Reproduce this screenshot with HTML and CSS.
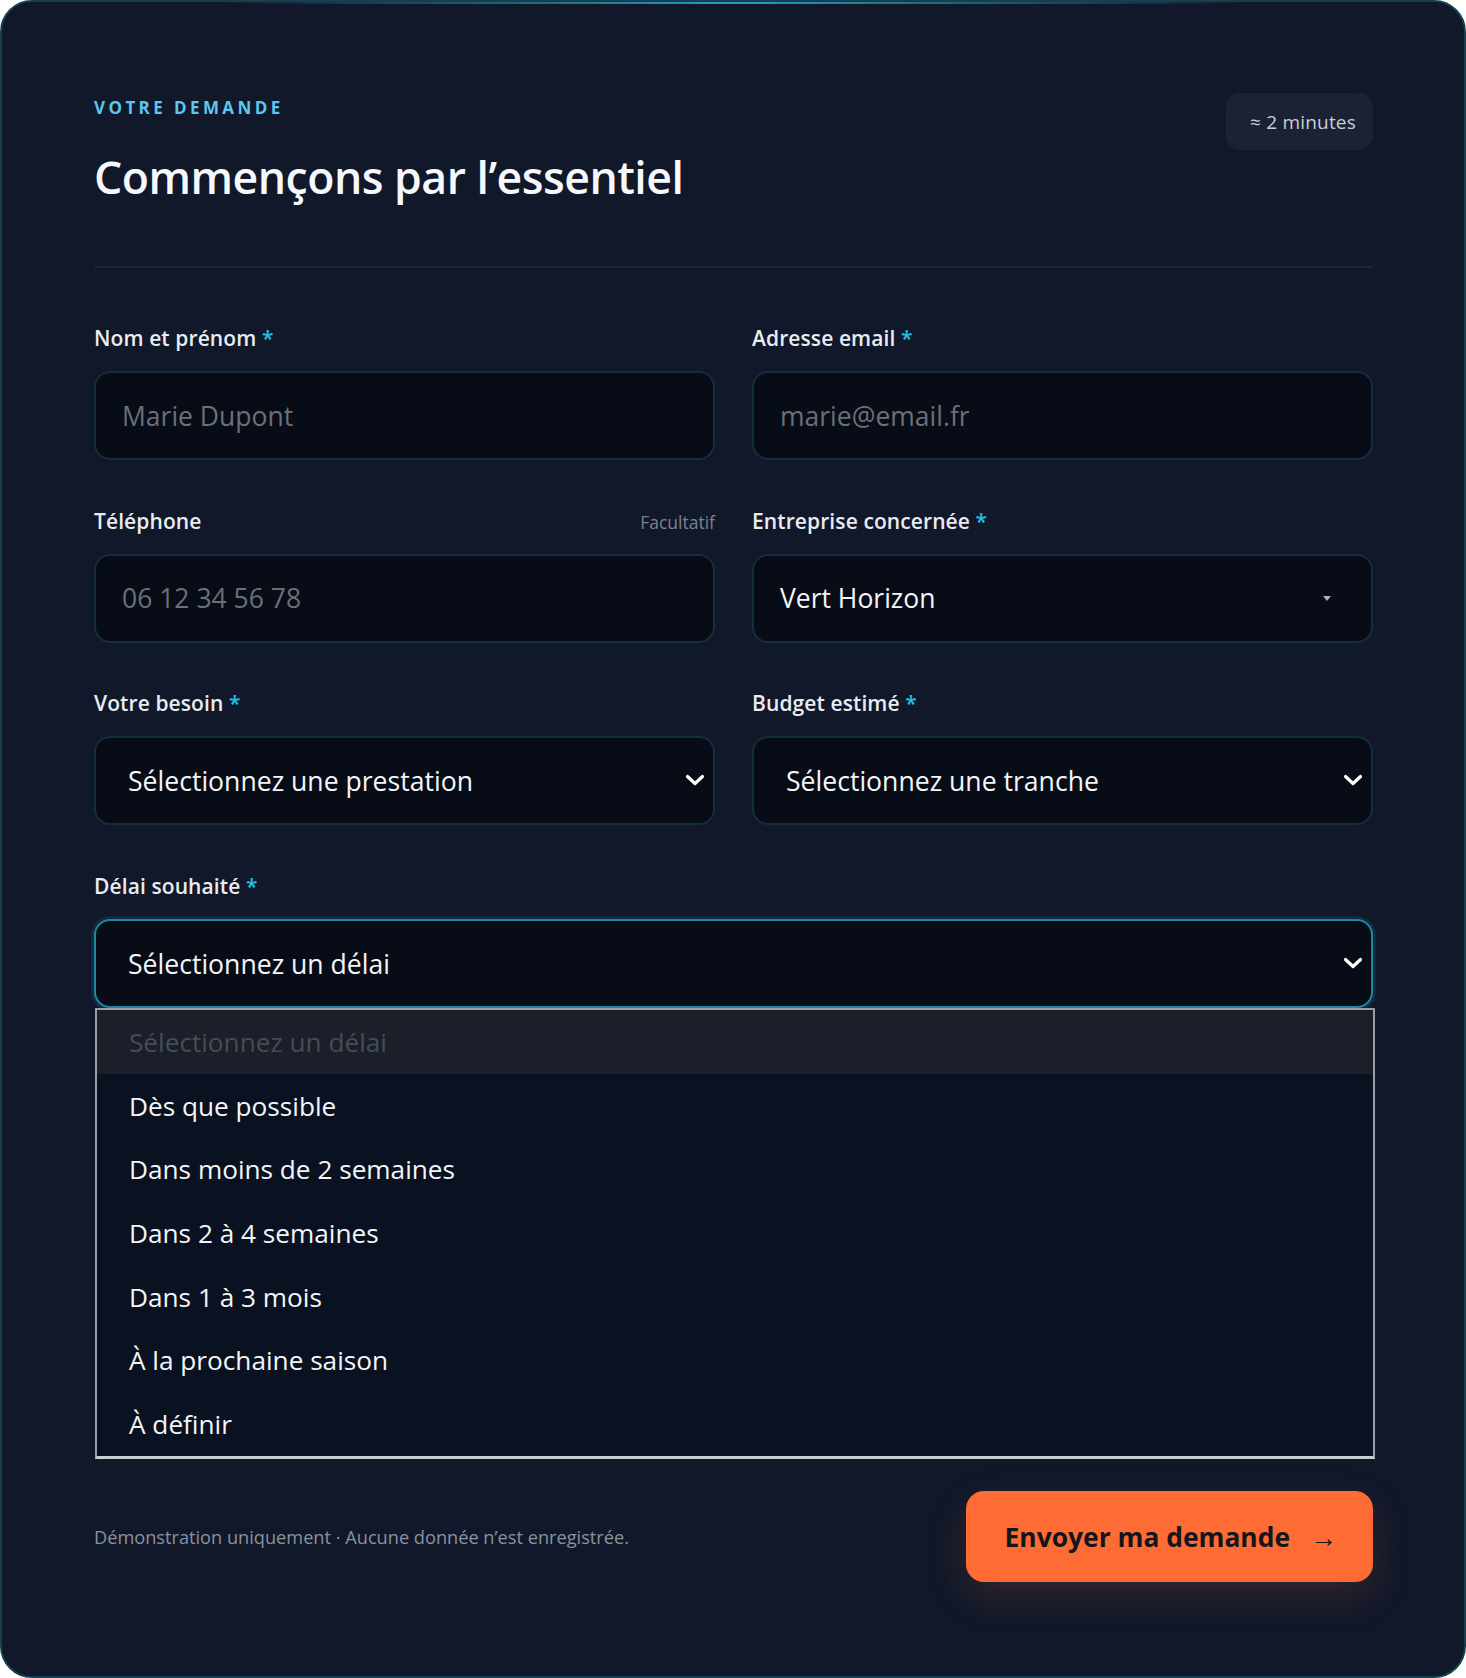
FILE: index.html
```html
<!DOCTYPE html>
<html lang="fr">
<head>
<meta charset="utf-8">
<title>Votre demande</title>
<link rel="stylesheet" href="styles.css">
</head>
<body>
<main class="card">
  <header class="head">
    <div class="head-text">
      <p class="eyebrow">VOTRE DEMANDE</p>
      <h1 class="title">Commençons par l’essentiel</h1>
    </div>
    <span class="badge">≈ 2 minutes</span>
  </header>

  <form class="fields">
    <div class="field">
      <div class="label-row"><label class="label">Nom et prénom <span class="req">*</span></label></div>
      <div class="control"><span class="placeholder">Marie Dupont</span></div>
    </div>
    <div class="field">
      <div class="label-row"><label class="label">Adresse email <span class="req">*</span></label></div>
      <div class="control"><span class="placeholder">marie@email.fr</span></div>
    </div>
    <div class="field">
      <div class="label-row"><label class="label">Téléphone</label><span class="hint">Facultatif</span></div>
      <div class="control"><span class="placeholder">06 12 34 56 78</span></div>
    </div>
    <div class="field">
      <div class="label-row"><label class="label">Entreprise concernée <span class="req">*</span></label></div>
      <div class="control control-select"><span class="value">Vert Horizon</span><span class="caret"></span></div>
    </div>
    <div class="field">
      <div class="label-row"><label class="label">Votre besoin <span class="req">*</span></label></div>
      <div class="control control-native"><span class="value">Sélectionnez une prestation</span>
        <svg class="chev" width="20" height="12" viewBox="0 0 20 12"><path d="M2.5 2.5 L10 9.5 L17.5 2.5" fill="none" stroke="#fff" stroke-width="3.2" stroke-linecap="round" stroke-linejoin="round"/></svg>
      </div>
    </div>
    <div class="field">
      <div class="label-row"><label class="label">Budget estimé <span class="req">*</span></label></div>
      <div class="control control-native"><span class="value">Sélectionnez une tranche</span>
        <svg class="chev" width="20" height="12" viewBox="0 0 20 12"><path d="M2.5 2.5 L10 9.5 L17.5 2.5" fill="none" stroke="#fff" stroke-width="3.2" stroke-linecap="round" stroke-linejoin="round"/></svg>
      </div>
    </div>
    <div class="field field-wide">
      <div class="label-row"><label class="label">Délai souhaité <span class="req">*</span></label></div>
      <div class="select-wrap">
        <div class="control control-native is-focus"><span class="value">Sélectionnez un délai</span>
          <svg class="chev" width="20" height="12" viewBox="0 0 20 12"><path d="M2.5 2.5 L10 9.5 L17.5 2.5" fill="none" stroke="#fff" stroke-width="3.2" stroke-linecap="round" stroke-linejoin="round"/></svg>
        </div>
        <ul class="listbox">
          <li class="opt opt-disabled">Sélectionnez un délai</li>
          <li class="opt">Dès que possible</li>
          <li class="opt">Dans moins de 2 semaines</li>
          <li class="opt">Dans 2 à 4 semaines</li>
          <li class="opt">Dans 1 à 3 mois</li>
          <li class="opt">À la prochaine saison</li>
          <li class="opt">À définir</li>
        </ul>
      </div>
    </div>
  </form>

  <footer class="foot">
    <p class="note">Démonstration uniquement · Aucune donnée n’est enregistrée.</p>
    <button class="submit" type="button">Envoyer ma demande <span class="arrow">→</span></button>
  </footer>
</main>
</body>
</html>
```

FILE: styles.css
```css
* { box-sizing: border-box; }

html, body {
  margin: 0;
  padding: 0;
  background: #ffffff;
}

body {
  font-family: "Open Sans", "Noto Sans", "Liberation Sans", sans-serif;
  color: #e8ebf0;
}

/* Card shell */
.card {
  position: relative;
  width: 1466px;
  height: 1678px;
  padding: 94px 91px 0 92px;
  background: #101829;
  border: 2px solid #17404f;
  border-radius: 32px;
  overflow: hidden;
}

.card::before {
  content: "";
  position: absolute;
  top: 0;
  left: 15%;
  right: 15%;
  height: 2px;
  background: linear-gradient(90deg, rgba(40, 150, 180, 0), #2a9ec0 50%, rgba(40, 150, 180, 0));
}

/* Heading */
.head {
  display: flex;
  justify-content: space-between;
  align-items: flex-start;
  padding-bottom: 61px;
  border-bottom: 2px solid #1c2534;
}

.head-text {
  padding-top: 1px;
}

.eyebrow {
  margin: 0;
  font-size: 17px;
  line-height: 22px;
  font-weight: 700;
  letter-spacing: 0.2em;
  color: #5cc6ee;
}

.title {
  margin: 30px 0 0;
  font-size: 44.6px;
  line-height: 56px;
  font-weight: 600;
  letter-spacing: -0.5px;
  color: #f6f8fb;
}

.badge {
  display: inline-flex;
  align-items: center;
  height: 57px;
  margin-top: -3px;
  padding: 0 17px 0 24px;
  border-radius: 14px;
  background: #1a2233;
  font-size: 19px;
  letter-spacing: 0.2px;
  color: #c9ced6;
}

/* Form grid */
.fields {
  display: grid;
  grid-template-columns: 1fr 1fr;
  column-gap: 37px;
  row-gap: 46.7px;
  margin-top: 56px;
}

.field-wide {
  grid-column: 1 / -1;
}

.label-row {
  display: flex;
  justify-content: space-between;
  align-items: baseline;
  height: 28px;
  margin-bottom: 19px;
}

.label {
  font-size: 21px;
  line-height: 28px;
  font-weight: 600;
  letter-spacing: 0.1px;
  color: #e9ecf1;
}

.req {
  color: #22c0e4;
}

.hint {
  font-size: 17.5px;
  color: #7b8390;
}

.control {
  position: relative;
  display: flex;
  align-items: center;
  height: 89px;
  padding: 0 26px;
  background: #070c17;
  border: 2px solid #132f3b;
  border-radius: 16px;
  font-size: 26.5px;
}

.placeholder {
  color: #6b7079;
}

.value {
  color: #f4f6f9;
}

.control-select .caret {
  position: absolute;
  right: 40px;
  top: 50%;
  margin-top: -2px;
  width: 0;
  height: 0;
  border-left: 4px solid transparent;
  border-right: 4px solid transparent;
  border-top: 5px solid #a9b1ba;
}

.control-native {
  padding-left: 32px;
  font-size: 26.6px;
}

.control-native .chev {
  position: absolute;
  right: 8px;
  top: 50%;
  margin-top: -7px;
}

.control-native.is-focus {
  border-color: #1f87a3;
  box-shadow: 0 0 0 3px rgba(31, 135, 163, 0.18);
}

/* Open option list */
.select-wrap {
  position: relative;
}

.listbox {
  position: absolute;
  top: 100%;
  left: 1px;
  width: 1280px;
  margin: 0;
  padding: 0;
  list-style: none;
  background: #0a1120;
  border: 2px solid #9a9ea4;
  border-bottom: 3px solid #c9ccd1;
  z-index: 5;
}

.opt {
  display: flex;
  align-items: center;
  height: 63.7px;
  padding-left: 32px;
  font-size: 26.2px;
  color: #f4f6f9;
}

.opt-disabled {
  background: #1a1f29;
  color: #464c56;
}

/* Footer */
.foot {
  display: flex;
  justify-content: space-between;
  align-items: center;
  margin-top: 483px;
}

.note {
  margin: 0;
  font-size: 18.2px;
  color: #8a929e;
}

.submit {
  display: inline-flex;
  align-items: center;
  gap: 20px;
  height: 91px;
  padding: 0 36px 0 39px;
  border: 0;
  border-radius: 18px;
  background: #ff6b35;
  font-family: inherit;
  font-size: 26.4px;
  font-weight: 700;
  color: #15161a;
  box-shadow: 0 14px 40px rgba(255, 107, 53, 0.16);
}

.arrow {
  font-size: 27px;
  font-weight: 700;
}
```
